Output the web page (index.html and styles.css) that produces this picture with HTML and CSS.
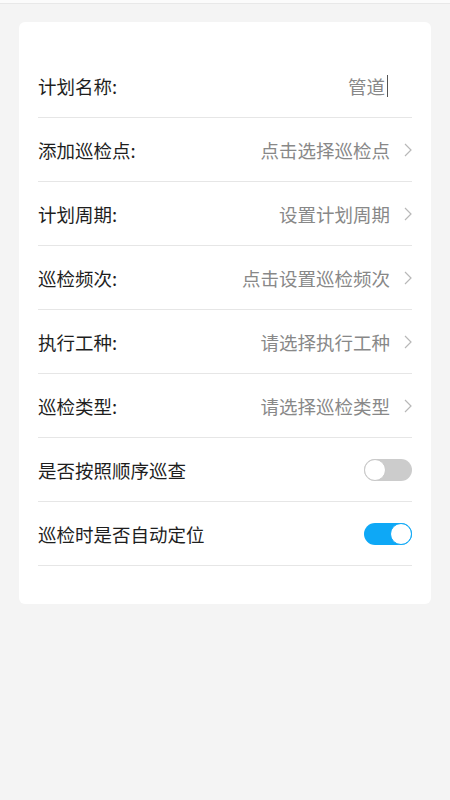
FILE: index.html
```html
<!DOCTYPE html>
<html lang="zh-CN">
<head>
<meta charset="utf-8">
<title>巡检计划</title>
<link rel="stylesheet" href="styles.css">
</head>
<body>
<div class="topbar"></div>
<main class="card">
  <div class="row">
    <span class="label">计划名称:</span>
    <span class="input-value">管道<i class="cursor"></i></span>
  </div>
  <div class="row">
    <span class="label">添加巡检点:</span>
    <span class="value">点击选择巡检点</span>
    <svg class="chev" viewBox="0 0 8 14" width="8" height="14"><polyline points="1,1 7,7 1,13"/></svg>
  </div>
  <div class="row">
    <span class="label">计划周期:</span>
    <span class="value">设置计划周期</span>
    <svg class="chev" viewBox="0 0 8 14" width="8" height="14"><polyline points="1,1 7,7 1,13"/></svg>
  </div>
  <div class="row">
    <span class="label">巡检频次:</span>
    <span class="value">点击设置巡检频次</span>
    <svg class="chev" viewBox="0 0 8 14" width="8" height="14"><polyline points="1,1 7,7 1,13"/></svg>
  </div>
  <div class="row">
    <span class="label">执行工种:</span>
    <span class="value">请选择执行工种</span>
    <svg class="chev" viewBox="0 0 8 14" width="8" height="14"><polyline points="1,1 7,7 1,13"/></svg>
  </div>
  <div class="row">
    <span class="label">巡检类型:</span>
    <span class="value">请选择巡检类型</span>
    <svg class="chev" viewBox="0 0 8 14" width="8" height="14"><polyline points="1,1 7,7 1,13"/></svg>
  </div>
  <div class="row">
    <span class="label">是否按照顺序巡查</span>
    <span class="switch"><span class="knob"></span></span>
  </div>
  <div class="row">
    <span class="label">巡检时是否自动定位</span>
    <span class="switch on"><span class="knob"></span></span>
  </div>
</main>
</body>
</html>
```

FILE: styles.css
```css
html, body {
  margin: 0;
  padding: 0;
  background: #f4f4f4;
  font-family: "Noto Sans CJK SC", "Noto Sans", sans-serif;
}
.topbar {
  height: 3px;
  background: #fbfbfb;
  border-bottom: 1px solid #e8e8e8;
}
.card {
  margin: 18px 19px 0 19px;
  background: #ffffff;
  border-radius: 6px;
  padding: 32px 19px 38px 19px;
}
.row {
  height: 64px;
  box-sizing: border-box;
  border-bottom: 1px solid #e6e6e6;
  display: flex;
  align-items: center;
  font-size: 18.5px;
}
.label {
  color: #1e1e1e;
  flex: 1;
  white-space: nowrap;
}
.value {
  color: #888888;
  white-space: nowrap;
}
.input-value {
  color: #888888;
  display: flex;
  align-items: center;
  margin-right: 24px;
}
.cursor {
  display: inline-block;
  width: 1px;
  height: 22px;
  background: #555555;
  margin-left: 2px;
}
.chev {
  margin-left: 14px;
  margin-top: 1px;
  fill: none;
  stroke: #b8b8b8;
  stroke-width: 1.2;
}
.switch {
  position: relative;
  width: 48px;
  height: 22px;
  border-radius: 11px;
  background: #cccccc;
  box-sizing: border-box;
}
.switch .knob {
  position: absolute;
  top: 0;
  left: 0;
  width: 22px;
  height: 22px;
  border-radius: 50%;
  background: #ffffff;
  border: 1px solid #c8c8c8;
  box-sizing: border-box;
}
.switch.on {
  background: #0ea8f6;
}
.switch.on .knob {
  left: 26px;
  border-color: #0ea8f6;
}
```
